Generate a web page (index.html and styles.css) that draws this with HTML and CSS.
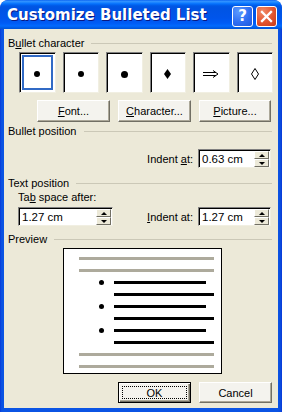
FILE: index.html
```html
<!DOCTYPE html>
<html>
<head>
<meta charset="utf-8">
<link rel="stylesheet" href="styles.css">
</head>
<body>
<div class="window">
  <div class="titlebar">
    <span class="title">Customize Bulleted List</span>
    <div class="tb-buttons">
      <div class="tb help">?</div>
      <div class="tb close">
        <svg width="19" height="19" viewBox="0 0 19 19"><path d="M5 5 L14 14 M14 5 L5 14" stroke="#fff" stroke-width="2.3" stroke-linecap="square"/></svg>
      </div>
    </div>
  </div>
  <div class="client">
    <div class="group-h"><span>B<u>u</u>llet character</span><i class="rule"></i></div>
    <div class="gallery">
      <div class="cell selected"><span class="dot"></span></div>
      <div class="cell"><span class="dot"></span></div>
      <div class="cell"><span class="dot big"></span></div>
      <div class="cell"><svg width="7" height="10" viewBox="0 0 7 10"><path d="M3.5 0 L7 5 L3.5 10 L0 5 Z" fill="#000"/></svg></div>
      <div class="cell"><svg width="16" height="8" viewBox="0 0 16 8"><path d="M0 2.5 H13 M0 5.5 H13 M10 0.5 L15 4 L10 7.5" stroke="#000" stroke-width="1" fill="none"/></svg></div>
      <div class="cell"><svg width="8" height="12" viewBox="0 0 8 12"><path d="M4 0.5 L7.5 6 L4 11.5 L0.5 6 Z" stroke="#000" stroke-width="1" fill="none"/></svg></div>
    </div>
    <div class="btnrow">
      <div class="btn"><u>F</u>ont...</div>
      <div class="btn"><u>C</u>haracter...</div>
      <div class="btn narrow"><u>P</u>icture...</div>
    </div>
    <div class="group-h h2"><span>Bullet position</span><i class="rule"></i></div>
    <div class="indent-row">
      <span class="lbl">Indent <u>a</u>t:</span>
      <div class="spin"><span class="val">0.63 cm</span><div class="arrows"><i class="up"></i><i class="down"></i></div></div>
    </div>
    <div class="group-h h3"><span>Text position</span><i class="rule"></i></div>
    <div class="textpos">
      <div class="tab-col">
        <span class="lbl">Ta<u>b</u> space after:</span>
        <div class="spin wide"><span class="val">1.27 cm</span><div class="arrows"><i class="up"></i><i class="down"></i></div></div>
      </div>
      <div class="ind-col">
        <span class="lbl"><u>I</u>ndent at:</span>
        <div class="spin"><span class="val">1.27 cm</span><div class="arrows"><i class="up"></i><i class="down"></i></div></div>
      </div>
    </div>
    <div class="group-h h4"><span>Preview</span><i class="rule"></i></div>
    <div class="preview">
      <div class="gline"></div>
      <div class="gline"></div>
      <div class="brow"><span class="pdot"></span><span class="bl short"></span></div>
      <div class="brow"><span class="pspace"></span><span class="bl"></span></div>
      <div class="brow"><span class="pdot"></span><span class="bl short"></span></div>
      <div class="brow"><span class="pspace"></span><span class="bl"></span></div>
      <div class="brow"><span class="pdot"></span><span class="bl short"></span></div>
      <div class="brow"><span class="pspace"></span><span class="bl"></span></div>
      <div class="gline"></div>
      <div class="gline"></div>
    </div>
    <div class="footer">
      <div class="btn ok"><span class="focus">OK</span></div>
      <div class="btn cancel">Cancel</div>
    </div>
  </div>
</div>
</body>
</html>
```

FILE: styles.css
```css
html, body {
  margin: 0;
  padding: 0;
}
body {
  width: 282px;
  height: 412px;
  overflow: hidden;
  background: #ffffff;
  font-family: "Liberation Sans", Arial, sans-serif;
  font-size: 11px;
  color: #000;
}
.window {
  width: 282px;
  height: 412px;
  box-sizing: border-box;
  display: flex;
  flex-direction: column;
  border-radius: 8px 8px 0 0;
  background: linear-gradient(to right, #0831D9 0, #0A4FE0 1px, #0B54E4 3px, #0B54E4 278px, #0A4ADB 281px, #0831D9 282px);
  overflow: hidden;
}
.titlebar {
  height: 29px;
  flex: none;
  box-sizing: border-box;
  display: flex;
  align-items: center;
  padding: 4px 5px 0 7px;
  border-radius: 8px 8px 0 0;
  background: linear-gradient(to bottom,
    #0058EE 0px, #3593FF 1px, #288EFF 2px, #127DFF 3px, #036FFC 4px,
    #0262EE 5px, #0057E5 6px, #0054E3 8px, #0055EB 18px, #005BF5 23px,
    #026AFE 26px, #0062EF 27px, #0052D6 29px);
}
.title {
  flex: 1;
  color: #fff;
  font-family: "DejaVu Sans", sans-serif;
  font-weight: bold;
  font-size: 15px;
  margin-top: -3px;
  text-shadow: 1px 1px 0 #0A1883;
  white-space: nowrap;
}
.tb-buttons {
  display: flex;
  gap: 3px;
}
.tb {
  width: 21px;
  height: 21px;
  box-sizing: border-box;
  border: 1px solid #fff;
  border-radius: 3px;
  display: flex;
  align-items: center;
  justify-content: center;
}
.help {
  background: radial-gradient(circle at 30% 25%, #5C9BFF 0, #2F6EF2 55%, #1D57DC 100%);
  color: #fff;
  font-family: "DejaVu Sans", sans-serif;
  font-weight: bold;
  font-size: 15px;
  line-height: 19px;
}
.close {
  background: radial-gradient(circle at 30% 25%, #F08A66 0, #E2542F 55%, #C83A18 100%);
}
.close svg {
  display: block;
}
.client {
  flex: 1;
  margin: 0 4px 4px 4px;
  background: #ECE9D8;
  padding: 8px 6px 0 4px;
  display: flex;
  flex-direction: column;
}
.group-h {
  height: 13px;
  line-height: 13px;
  display: flex;
  align-items: center;
  gap: 7px;
  white-space: nowrap;
}
.rule {
  flex: 1;
  height: 1px;
  background: #CBC8B7;
}
.h2 { margin-top: 3px; }
.h3 { margin-top: 9px; }
.h4 { margin-top: 7px; }

.gallery {
  margin: 2px -1px 0 11px;
  height: 41px;
  display: grid;
  grid-template-columns: repeat(6, 1fr);
  column-gap: 7px;
}
.cell {
  box-sizing: border-box;
  background: #fff;
  border-style: solid;
  border-width: 1px;
  border-color: #808080 #F1EFE2 #F1EFE2 #808080;
  box-shadow: inset 1px 1px 0 #000;
  display: flex;
  align-items: center;
  justify-content: center;
  padding-top: 3px;
}
.cell.selected {
  box-shadow: inset 1px 1px 0 #000, inset 0 0 0 2px #fff, inset 0 0 0 4px #316AC5;
}
.dot {
  width: 6px;
  height: 6px;
  border-radius: 50%;
  background: #000;
}
.dot.big {
  width: 7px;
  height: 7px;
}
.btnrow {
  margin-top: 7px;
  height: 22px;
  padding-left: 29px;
  display: flex;
  gap: 8px;
}
.btn {
  width: 73px;
  height: 22px;
  box-sizing: border-box;
  background: #F4F3EE;
  border: 1px solid;
  border-color: #FFFFFF #716F64 #716F64 #FFFFFF;
  box-shadow: inset -1px -1px 0 #ACA899;
  display: flex;
  align-items: center;
  justify-content: center;
  white-space: nowrap;
}
.btn.narrow { width: 72px; }

.indent-row {
  margin-top: 11px;
  margin-right: 1px;
  display: flex;
  justify-content: flex-end;
  align-items: center;
  gap: 5px;
}
.spin {
  width: 73px;
  height: 19px;
  box-sizing: border-box;
  background: #fff;
  border: 1px solid;
  border-color: #808080 #F1EFE2 #F1EFE2 #808080;
  box-shadow: inset 1px 1px 0 #000;
  display: flex;
  align-items: center;
  padding: 1px 1px 0 3px;
}
.spin.wide { width: 95px; }
.val {
  flex: 1;
  white-space: nowrap;
  font-size: 11.5px;
}
.arrows {
  width: 15px;
  height: 16px;
  display: flex;
  flex-direction: column;
}
.arrows i {
  flex: 1;
  box-sizing: border-box;
  background: #ECE9D8;
  border: 1px solid;
  border-color: #FFFFFF #716F64 #716F64 #FFFFFF;
  display: flex;
  align-items: center;
  justify-content: center;
}
.arrows i::after {
  content: "";
  width: 0;
  height: 0;
  border-left: 3px solid transparent;
  border-right: 3px solid transparent;
}
.arrows .up::after { border-bottom: 3px solid #000; }
.arrows .down::after { border-top: 3px solid #000; }

.textpos {
  margin-top: 1px;
  margin-right: 1px;
  display: flex;
  justify-content: space-between;
  align-items: flex-end;
}
.tab-col {
  margin-left: 10px;
  display: flex;
  flex-direction: column;
  gap: 3px;
}
.tab-col .lbl {
  height: 13px;
  line-height: 13px;
}
.ind-col {
  display: flex;
  align-items: center;
  gap: 5px;
}
.preview {
  margin: 2px 0 0 55px;
  width: 159px;
  height: 126px;
  box-sizing: border-box;
  border: 1px solid #000;
  background: #fff;
  padding-top: 8px;
  display: flex;
  flex-direction: column;
  gap: 9px;
}
.gline {
  height: 3px;
  margin-left: 15px;
  width: 135px;
  background: #ADAA9C;
}
.brow {
  height: 3px;
  padding-left: 35px;
  display: flex;
  align-items: center;
  gap: 10px;
}
.pdot, .pspace {
  width: 5px;
  height: 5px;
  flex: none;
}
.pdot {
  border-radius: 50%;
  background: #000;
}
.bl {
  height: 3px;
  width: 100px;
  background: #000;
}
.bl.short { width: 92px; }

.footer {
  margin-top: 8px;
  display: flex;
  justify-content: flex-end;
  gap: 8px;
}
.footer .btn {
  height: 21px;
}
.btn.ok {
  border: 1px solid #000;
  box-shadow: inset 1px 1px 0 #fff, inset -1px -1px 0 #716F64, inset -2px -2px 0 #ACA899;
  padding: 3px;
}
.focus {
  flex: 1;
  align-self: stretch;
  display: flex;
  align-items: center;
  justify-content: center;
  outline: 1px dotted #000;
  outline-offset: -1px;
}
```
